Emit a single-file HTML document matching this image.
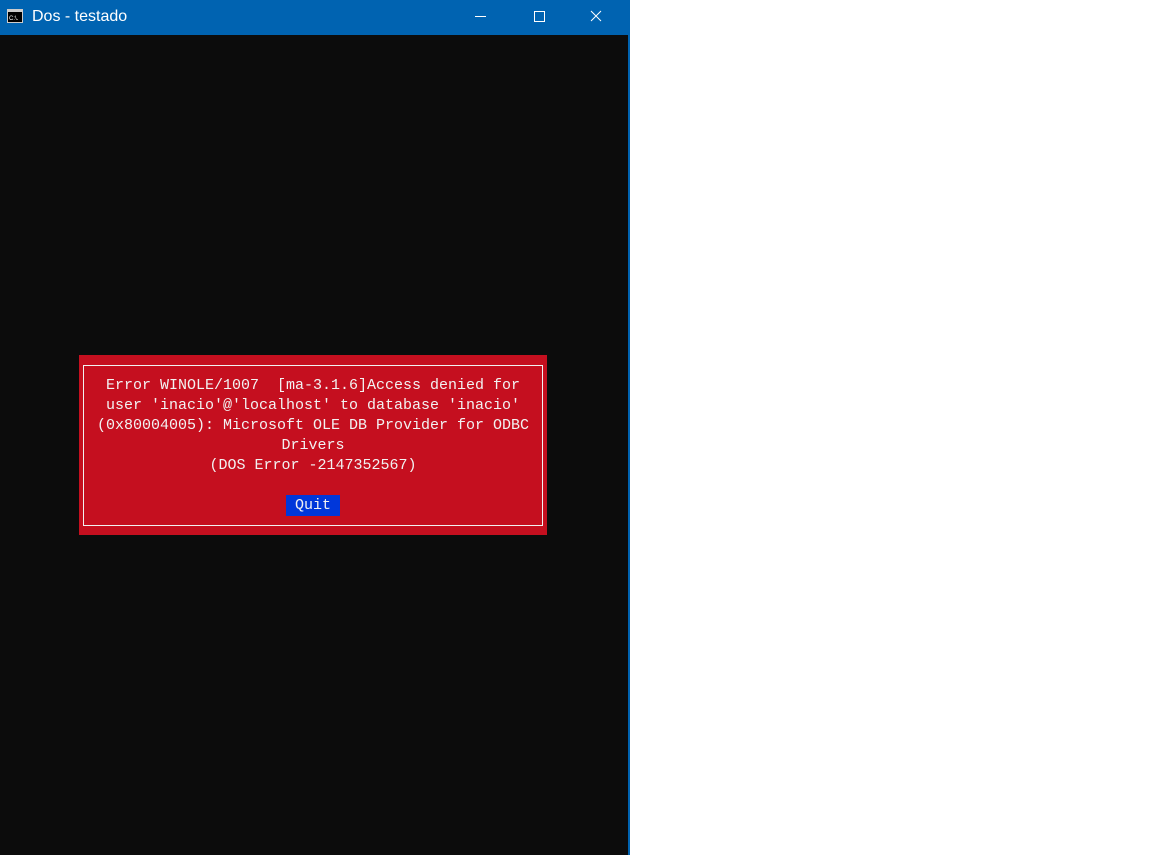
<!DOCTYPE html>
<html><head><meta charset="utf-8"><style>
html,body{margin:0;padding:0;width:1152px;height:855px;background:#fff;overflow:hidden;position:relative}
.win{position:absolute;left:0;top:0;width:628px;height:855px;background:#0c0c0c}
.bar{position:absolute;left:0;top:0;width:628px;height:35px;background:#0063b1}
.edge{position:absolute;left:628px;top:0;width:2px;height:855px;background:#0063b1}
.title{position:absolute;left:32px;top:8px;font:16px "Liberation Sans",sans-serif;color:#fff}
.red{position:absolute;left:79px;top:355px;width:468px;height:180px;background:#c50f1f}
.inner{position:absolute;left:83px;top:365px;width:458px;height:159px;border:1px solid #f2f2f2}
.txt{position:absolute;left:79px;top:376px;width:468px;text-align:center;font:15px/20px "Liberation Mono",monospace;color:#f2f2f2;white-space:pre}
.quit{position:absolute;left:286px;top:495px;width:54px;height:21px;background:#0037da;color:#f2f2f2;font:15px/21px "Liberation Mono",monospace;text-align:center}
</style></head><body>
<div class="win"></div>
<div class="bar"></div>
<div class="edge"></div>
<svg style="position:absolute;left:7px;top:9px" width="16" height="14"><rect x="0.5" y="0.5" width="15" height="13" fill="#000" stroke="#ccc"/><rect x="1" y="1" width="14" height="2" fill="#ccc"/><text x="2" y="11" font-family="Liberation Sans" font-size="6" fill="#fff">C:\.</text></svg>
<div class="title">Dos - testado</div>
<svg style="position:absolute;left:470px;top:10px" width="140" height="16">
<line x1="5" y1="6.5" x2="16" y2="6.5" stroke="#fff" stroke-width="1"/>
<rect x="64.5" y="1.5" width="10" height="10" fill="none" stroke="#fff"/>
<path d="M121 1L131 11M131 1L121 11" stroke="#fff" stroke-width="1"/>
</svg>
<div class="red"></div>
<div class="inner"></div>
<div class="txt">Error WINOLE/1007  [ma-3.1.6]Access denied for
user 'inacio'@'localhost' to database 'inacio'
(0x80004005): Microsoft OLE DB Provider for ODBC
Drivers
(DOS Error -2147352567)</div>
<div class="quit">Quit</div>
</body></html>
